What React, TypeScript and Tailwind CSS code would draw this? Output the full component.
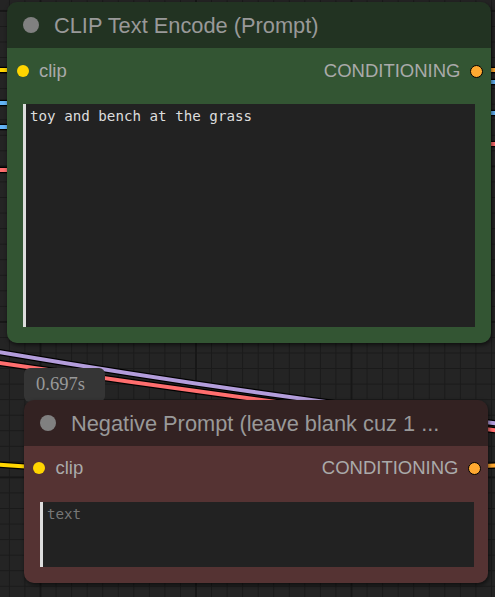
import React from 'react';

const sans = { fontFamily: '"Liberation Sans", Arial, sans-serif' };
const mono = { fontFamily: '"DejaVu Sans Mono", "Liberation Mono", monospace' };
const serif = { fontFamily: '"Liberation Serif", "Times New Roman", serif' };

type Wire = { d: string; color: string };

const wires: Wire[] = [
  // behind the CLIP node, left side
  { d: 'M-10 70 L20 70', color: '#FFD500' },
  { d: 'M-10 103 L20 103', color: '#64B5F6' },
  { d: 'M-10 127 L20 127', color: '#64B5F6' },
  { d: 'M-10 170 L20 170', color: '#FF6E6E' },
  // right side
  { d: 'M470 70 L505 70', color: '#FFA931' },
  { d: 'M470 82 L505 82', color: '#64B5F6' },
  { d: 'M470 113 L505 113', color: '#64B5F6' },
  { d: 'M470 144 L505 144', color: '#FF6E6E' },
  // long links crossing the gap
  { d: 'M-10 350.5 Q250 395 505 424.5', color: '#B39DDB' },
  { d: 'M-10 361.5 Q250 400 505 431.5', color: '#FF6E6E' },
  // negative prompt links
  { d: 'M-10 464 L40 467.5', color: '#FFD500' },
  { d: 'M470 466.5 L505 465', color: '#FFA931' },
];

function Canvas() {
  return (
    <svg className="absolute inset-0" width={495} height={597}>
      <defs>
        <pattern id="minor" x={8.9} y={10.4} width={15.55} height={15.55} patternUnits="userSpaceOnUse">
          <rect x={0} y={0} width={1} height={15.55} fill="#1a1a1a" />
          <rect x={0} y={0} width={15.55} height={1} fill="#1a1a1a" />
        </pattern>
        <pattern id="major" x={39.5} y={9.9} width={155.5} height={155.5} patternUnits="userSpaceOnUse">
          <rect x={0} y={0} width={2} height={155.5} fill="#171717" />
          <rect x={0} y={0} width={155.5} height={2} fill="#171717" />
        </pattern>
      </defs>
      <rect width={495} height={597} fill="#242424" />
      <rect width={495} height={597} fill="url(#minor)" />
      <rect width={495} height={597} fill="url(#major)" />
      {wires.map((w, i) => (
        <g key={i} fill="none">
          <path d={w.d} stroke="#000" strokeWidth={6.5} />
          <path d={w.d} stroke={w.color} strokeWidth={4} />
        </g>
      ))}
    </svg>
  );
}

function SlotRow({ className, labelGap }: { className: string; labelGap: string }) {
  return (
    <div className={`flex h-[24px] items-center justify-between ${className}`}>
      <div className="flex items-center">
        <span className="h-[12px] w-[12px] rounded-full bg-[#FFD500]" />
        <span className={`${labelGap} text-[18.5px] leading-none text-[#aaa]`} style={sans}>
          clip
        </span>
      </div>
      <div className="flex items-center">
        <span className="text-[18.5px] leading-none text-[#aaa]" style={sans}>
          CONDITIONING
        </span>
        <span className="ml-[9.5px] h-[13px] w-[13px] rounded-full border border-black bg-[#FFA931]" />
      </div>
    </div>
  );
}

function Title({ text, bg }: { text: string; bg: string }) {
  return (
    <div className={`flex h-[46px] items-center pl-[15.5px] ${bg}`}>
      <span className="h-[16px] w-[16px] shrink-0 rounded-full bg-[#808080]" />
      <span className="ml-[15.5px] mt-[2px] whitespace-nowrap text-[21.8px] leading-none text-[#999]" style={sans}>
        {text}
      </span>
    </div>
  );
}

export default function App() {
  return (
    <div className="relative h-[597px] w-[495px] overflow-hidden bg-[#242424]">
      <Canvas />

      {/* CLIP Text Encode */}
      <div className="absolute left-[7px] top-[2px] w-[484px] overflow-hidden rounded-[10px] shadow-[1px_2px_4px_rgba(0,0,0,0.6)]">
        <Title text="CLIP Text Encode (Prompt)" bg="bg-[#223322]" />
        <div className="bg-[#335533] pb-[16px] pt-[11px]">
          <SlotRow className="pl-[10px] pr-[8px]" labelGap="ml-[10px]" />
          <div
            className="mx-[16px] mt-[21px] h-[223px] border-l-[3px] border-[#dddddd] bg-[#222222] pl-[4px] pt-[4px] text-[14.2px] leading-[16px] text-[#dddddd]"
            style={mono}
          >
            toy and bench at the grass
          </div>
        </div>
      </div>

      {/* execution time badge */}
      <div className="absolute left-[24px] top-[368px] h-[34px] w-[81px] rounded-[6px] bg-[#353535] pl-[12px]">
        <span className="text-[18.5px] leading-[32px] text-[#999]" style={serif}>
          0.697s
        </span>
      </div>

      {/* Negative Prompt */}
      <div className="absolute left-[24px] top-[400px] w-[464px] overflow-hidden rounded-[10px] shadow-[1px_2px_4px_rgba(0,0,0,0.6)]">
        <Title text="Negative Prompt (leave blank cuz 1 ..." bg="bg-[#332222]" />
        <div className="bg-[#553333] pb-[16px] pt-[10px]">
          <SlotRow className="pl-[9px] pr-[7px]" labelGap="ml-[10.5px]" />
          <div
            className="ml-[16px] mr-[14px] mt-[22px] h-[65px] border-l-[3px] border-[#dddddd] bg-[#222222] pl-[4px] pt-[4px] text-[14.2px] leading-[16px] text-[#777777]"
            style={mono}
          >
            text
          </div>
        </div>
      </div>
    </div>
  );
}
